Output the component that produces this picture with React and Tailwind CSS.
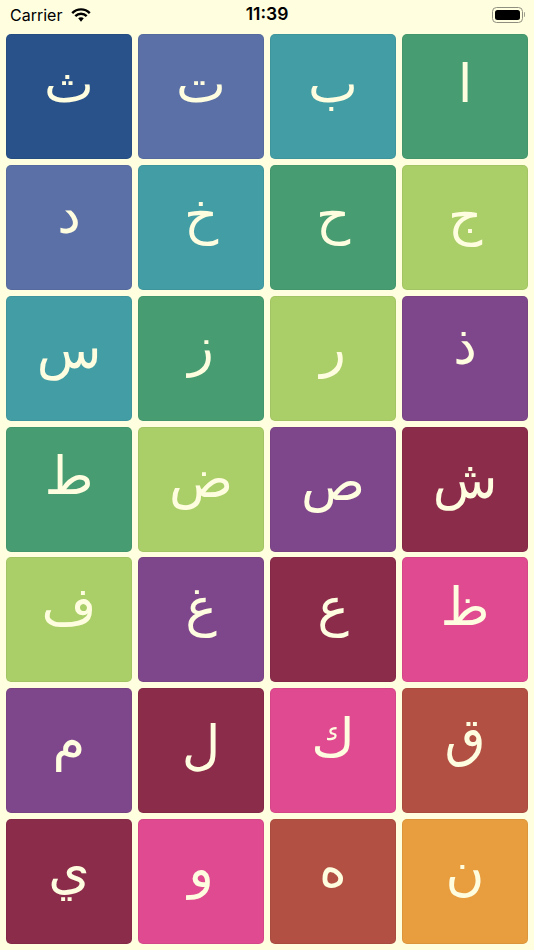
const C = {
  navy: "bg-[#29528a]", slate: "bg-[#5b70a6]", teal: "bg-[#429da5]", green: "bg-[#479d71]", lime: "bg-[#abcf68]",
  purple: "bg-[#7f478b]", wine: "bg-[#8b2c4b]", pink: "bg-[#df4a90]", brick: "bg-[#b25143]", orange: "bg-[#e89e3f]",
};
const cells = [
  ["ث", C.navy, "pb-[26px]"], ["ت", C.slate, "pb-[26px]"], ["ب", C.teal, "pb-[26px]"], ["ا", C.green, "pb-[26px]"],
  ["د", C.slate, "pb-[26px]"], ["خ", C.teal, "pb-[26px]"], ["ح", C.green, "pb-[26px]"], ["ج", C.lime, "pb-[24px]"],
  ["س", C.teal, "pb-[18px]"], ["ز", C.green, "pb-[24px]"], ["ر", C.lime, "pb-[22px]"], ["ذ", C.purple, "pb-[26px]"],
  ["ط", C.green, "pb-[28px]"], ["ض", C.lime, "pb-[22px]"], ["ص", C.purple, "pb-[16px]"], ["ش", C.wine, "pb-[20px]"],
  ["ف", C.lime, "pb-[26px]"], ["غ", C.purple, "pb-[26px]"], ["ع", C.wine, "pb-[26px]"], ["ظ", C.pink, "pb-[26px]"],
  ["م", C.purple, "pb-[20px]"], ["ل", C.wine, "pb-[12px]"], ["ك", C.pink, "pb-[26px]"], ["ق", C.brick, "pb-[26px]"],
  ["ي", C.wine, "pb-[24px]"], ["و", C.pink, "pb-[26px]"], ["ه", C.brick, "pb-[26px]"], ["ن", C.orange, "pb-[22px]"],
];

function Wifi() {
  return (
    <svg width="20" height="14" viewBox="0 0 20 14" fill="none" stroke="#000" strokeWidth="2.400">
      <path d="M1.200 5.100C3.500 2.800 6.600 1.400 10 1.400s6.500 1.400 8.800 3.700" />
      <path d="M4.300 8.200C5.800 6.700 7.800 5.800 10 5.800s4.200.9 5.700 2.400" />
      <path d="M10 9.200c-1.100 0-2.100.4-2.800 1.100L10 13.800l2.800-3.500c-.7-.7-1.700-1.100-2.800-1.100z" fill="#000" stroke="none" />
    </svg>
  );
}

function Battery() {
  return (
    <div className="flex items-center">
      <div className="w-[31px] h-[16px] rounded-[4.5px] border border-[#8f8f80] p-[2px]">
        <div className="w-full h-full rounded-[2.5px] bg-black" />
      </div>
      <div className="w-[1.5px] h-[5px] ml-[1px] rounded-r-full bg-[#a0a090]" />
    </div>
  );
}

export default function App() {
  return (
    <div className="w-[534px] h-[950px] overflow-hidden bg-[#ffffe0]">
      <div className="relative h-[34.3px] flex items-center justify-between pl-[10px] pr-[9px] pb-[5px] text-black font-['Inter','Liberation_Sans',sans-serif]">
        <div className="flex items-center gap-[9px]">
          <span className="text-[16px] leading-none">Carrier</span>
          <Wifi />
        </div>
        <span className="absolute left-0 right-0 -mt-[1px] text-center text-[17.500px] font-semibold leading-none">11:39</span>
        <Battery />
      </div>
      <div className="grid grid-cols-4 gap-x-[6px] gap-y-[5.800px] auto-rows-[125px] px-[6px]">
        {cells.map(([ch, bg, pb], i) => (
          <div
            key={i}
            className={`${bg} ${pb} rounded-[5px] border border-black/5 flex items-center justify-center text-[#fffde0] text-[53px] leading-none font-['DejaVu_Sans',sans-serif]`}
          >
            <span dir="rtl">{ch}</span>
          </div>
        ))}
      </div>
    </div>
  );
}
